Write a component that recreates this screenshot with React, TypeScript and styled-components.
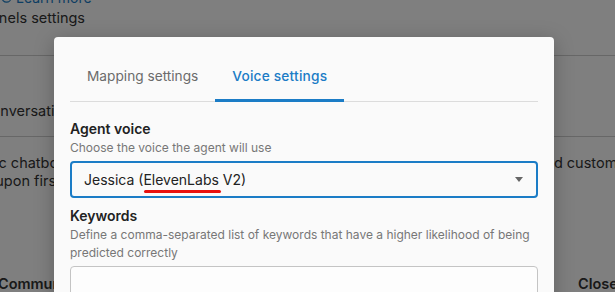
import React from "react";
import styled, { createGlobalStyle } from "styled-components";

const Global = createGlobalStyle`
  html, body { margin: 0; padding: 0; background: #ffffff; }
  body { font-family: Inter, "Noto Sans", "Liberation Sans", sans-serif; overflow: hidden; }
  #root { width: 615px; height: 292px; position: relative; overflow: hidden; }
`;

const Page = styled.div`
  width: 615px;
  height: 292px;
  overflow: hidden;
  color: #333;
  font-size: 14.5px;
`;

const Row = styled.div<{ $h: number; $pt: number }>`
  height: ${(p) => p.$h}px;
  box-sizing: border-box;
  padding-top: ${(p) => p.$pt}px;
  border-bottom: 1px solid #cfcfcf;
  line-height: 18px;
`;

const ClipText = styled.div<{ $shift: number; $bold?: boolean }>`
  margin-left: ${(p) => -p.$shift}px;
  white-space: nowrap;
  font-weight: ${(p) => (p.$bold ? 600 : 400)};
`;

const LearnLink = styled.div`
  display: flex;
  align-items: center;
  gap: 4px;
  color: #1b7cc6;
  font-size: 14px;
  margin-top: -9px;
  height: 12px;
  padding-left: 1px;
`;

const Columns = styled.div`
  display: flex;
  justify-content: space-between;
  height: 138px;
  padding-top: 17px;
  box-sizing: border-box;
`;

const Col = styled.div<{ $shift: number }>`
  display: flex;
  flex-direction: column;
  margin-left: ${(p) => -p.$shift}px;
  line-height: 18px;
  white-space: nowrap;
`;

const ColRight = styled.div`
  display: flex;
  flex-direction: column;
  line-height: 18px;
  white-space: nowrap;
  width: 80px;
  flex-shrink: 0;
`;

const BottomRow = styled.div`
  display: flex;
  justify-content: space-between;
  font-weight: 600;
  white-space: nowrap;
  line-height: 18px;
`;

const CutEnd = styled.span`
  width: 37px;
  overflow: hidden;
`;

const Overlay = styled.div`
  position: absolute;
  inset: 0;
  background: rgba(0, 0, 0, 0.5);
  padding: 37px 0 0 54px;
`;

const Modal = styled.div`
  width: 500px;
  height: 300px;
  background: #fafafa;
  border-radius: 4px;
  box-shadow: 0 4px 20px rgba(0, 0, 0, 0.25);
  padding: 16px 16px 0;
  box-sizing: border-box;
`;

const Tabs = styled.div`
  display: flex;
  border-bottom: 1px solid #dcdcdc;
  height: 48px;
`;

const Tab = styled.div<{ $active?: boolean }>`
  padding: 0 17px;
  display: flex;
  align-items: center;
  font-size: 13.7px;
  font-weight: ${(p) => (p.$active ? 500 : 400)};
  letter-spacing: ${(p) => (p.$active ? "0.2px" : "0")};
  color: ${(p) => (p.$active ? "#1b7cc6" : "#6b6b6b")};
  border-bottom: 3px solid ${(p) => (p.$active ? "#1b7cc6" : "transparent")};
  margin-bottom: -1px;
  box-sizing: border-box;
`;

const Section = styled.div`
  display: flex;
  flex-direction: column;
  padding-top: 17px;
`;

const Label = styled.div`
  font-size: 14px;
  font-weight: 600;
  color: #222;
  line-height: 20px;
`;

const Hint = styled.div`
  font-size: 12px;
  color: #777;
  line-height: 18px;
`;

const Select = styled.div`
  margin-top: 4px;
  height: 37px;
  border: 2px solid #1b7cc6;
  border-radius: 4px;
  box-sizing: border-box;
  display: flex;
  align-items: center;
  justify-content: space-between;
  padding: 0 13px 0 12px;
  font-size: 14px;
  color: #222;
`;

const Marked = styled.span`
  position: relative;
  &::after {
    content: "";
    position: absolute;
    left: 1px;
    right: -2px;
    bottom: -5px;
    height: 3px;
    border-radius: 2px;
    background: #e8110f;
  }
`;

const Caret = styled.span`
  width: 0;
  height: 0;
  border-left: 4.5px solid transparent;
  border-right: 4.5px solid transparent;
  border-top: 5px solid #666;
`;

const KeywordsSection = styled.div`
  display: flex;
  flex-direction: column;
  margin-top: 8px;
`;

const TextArea = styled.div`
  margin-top: 4px;
  height: 60px;
  border: 1px solid #c4c4c4;
  border-radius: 4px;
  background: #fdfdfd;
`;

export default function App() {
  return (
    <>
      <Global />
      <Page>
        <LearnLink>
          <svg width="11" height="11" viewBox="0 0 12 12">
            <circle cx="6" cy="6" r="5" fill="none" stroke="#1b7cc6" strokeWidth="1.2" />
          </svg>
          <span>Learn more</span>
        </LearnLink>
        <Row $h={53} $pt={6}>
          <ClipText $shift={37}>Channels settings</ClipText>
        </Row>
        <Row $h={81} $pt={46}>
          <ClipText $shift={19}>Conversations</ClipText>
        </Row>
        <Columns>
          <Col $shift={47}>
            <span>Generic chatbot</span>
            <span>Reply upon first</span>
          </Col>
          <ColRight>
            <span>Add customer</span>
          </ColRight>
        </Columns>
        <BottomRow>
          <ClipText $shift={2} $bold>Community</ClipText>
          <CutEnd>Closed</CutEnd>
        </BottomRow>
      </Page>
      <Overlay>
        <Modal>
          <Tabs>
            <Tab>Mapping settings</Tab>
            <Tab $active>Voice settings</Tab>
          </Tabs>
          <Section>
            <Label>Agent voice</Label>
            <Hint>Choose the voice the agent will use</Hint>
            <Select>
              <span>
                Jessica (<Marked>ElevenLabs</Marked> V2)
              </span>
              <Caret />
            </Select>
          </Section>
          <KeywordsSection>
            <Label>Keywords</Label>
            <Hint>
              Define a comma-separated list of keywords that have a higher likelihood of being predicted correctly
            </Hint>
            <TextArea />
          </KeywordsSection>
        </Modal>
      </Overlay>
    </>
  );
}
